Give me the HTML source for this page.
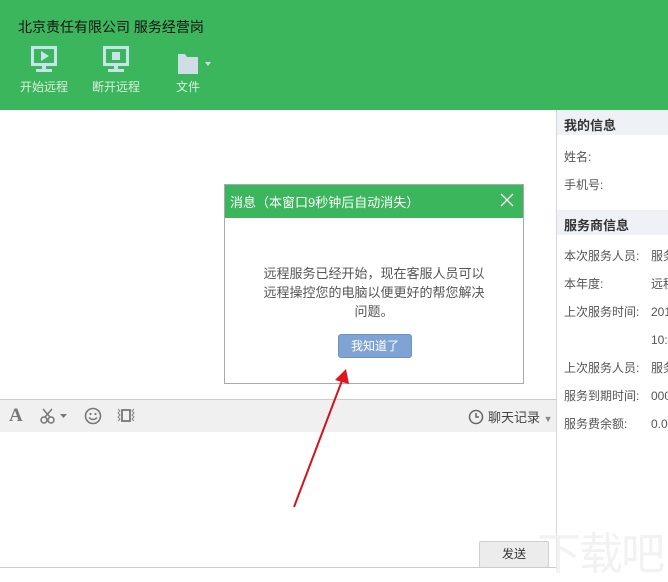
<!DOCTYPE html>
<html><head><meta charset="utf-8"><style>
*{margin:0;padding:0;box-sizing:border-box}
body{width:668px;height:570px;overflow:hidden;background:#fff;font-family:"Liberation Sans","Noto Sans CJK SC",sans-serif;position:relative;font-size:12px}
.top{position:absolute;left:0;top:0;width:668px;height:110px;background:#3cb65d}
.title{position:absolute;left:18px;top:17px;font-size:14px;color:#111}
.tb{position:absolute;top:78px;font-size:12px;color:#d8eedd}
.side{position:absolute;left:556px;top:110px;width:112px;height:460px;border-left:1px solid #d6d6d6;background:#fff}
.sh{position:absolute;left:0;width:112px;height:25px;background:#eef2f7;font-size:13px;font-weight:bold;color:#333;padding:5px 0 0 7px}
.sl{position:absolute;left:7px;color:#555;font-size:12px;white-space:nowrap;line-height:16px;height:16px}
.v{position:absolute;left:87px;top:0;line-height:16px}
.bar{position:absolute;left:0;top:399px;width:556px;height:33px;background:#f0f0f0;border-top:1px solid #ccc}
.dlg{position:absolute;left:224px;top:184px;width:300px;height:200px;border:1px solid #aaa;background:#fff}
.dh{height:33px;background:#3cb65d;color:#fff;font-size:13px;padding:7px 0 0 5px}
.msg{position:absolute;left:0;top:79px;width:298px;text-align:center;font-size:13px;color:#555;line-height:19px}
.btn{position:absolute;left:113px;top:149px;width:74px;height:24px;background:#7fa4d4;border:1px solid #6b93c8;border-radius:3px;color:#fff;text-align:center;font-size:12px;line-height:22px}
.send{position:absolute;left:479px;top:541px;width:70px;height:27px;background:#ececec;border:1px solid #d0d0d0;border-radius:2px;text-align:center;line-height:25px;color:#333}
</style></head><body>
<div class="top">
<div class="title">北京责任有限公司 服务经营岗</div>
<svg style="position:absolute;left:30px;top:46px" width="28" height="28"><rect x="2.5" y="1.5" width="23" height="17" fill="none" stroke="#c6e4ea" stroke-width="3"/><polygon points="11,5 11,15 19,10" fill="#c6e4ea"/><rect x="12" y="20" width="4" height="4" fill="#c6e4ea"/><rect x="6" y="23" width="16" height="3" fill="#c6e4ea"/></svg>
<svg style="position:absolute;left:102px;top:46px" width="28" height="28"><rect x="2.5" y="1.5" width="23" height="17" fill="none" stroke="#c6e4ea" stroke-width="3"/><rect x="10" y="6" width="8" height="8" fill="#c6e4ea"/><rect x="12" y="20" width="4" height="4" fill="#c6e4ea"/><rect x="6" y="23" width="16" height="3" fill="#c6e4ea"/></svg>
<svg style="position:absolute;left:176px;top:52px" width="40" height="22"><path d="M2 2h7l2 3h11v17H2z" fill="#cfdde6"/><polygon points="29,10 35,10 32,14" fill="#cfdde6"/></svg>
<div class="tb" style="left:20px">开始远程</div>
<div class="tb" style="left:92px">断开远程</div>
<div class="tb" style="left:176px">文件</div>
</div>
<div class="side">
<div class="sh" style="top:0">我的信息</div>
<div class="sl" style="top:39px">姓名:</div>
<div class="sl" style="top:67px">手机号:</div>
<div class="sh" style="top:100px">服务商信息</div>
<div class="sl" style="top:138px">本次服务人员:<span class="v">服务</span></div>
<div class="sl" style="top:166px">本年度:<span class="v">远程</span></div>
<div class="sl" style="top:194px">上次服务时间:<span class="v">2019</span></div>
<div class="sl" style="top:222px"><span class="v">10:4</span></div>
<div class="sl" style="top:250px">上次服务人员:<span class="v">服务</span></div>
<div class="sl" style="top:278px">服务到期时间:<span class="v">0000</span></div>
<div class="sl" style="top:306px">服务费余额:<span class="v">0.00</span></div>
</div>
<div class="bar">
<span style="position:absolute;left:9px;top:5px;font-size:19px;font-family:'Liberation Serif',serif;font-weight:bold;color:#777">A</span>
<svg style="position:absolute;left:40px;top:8px" width="30" height="16"><circle cx="4" cy="12" r="3" fill="none" stroke="#777" stroke-width="1.5"/><circle cx="11" cy="12" r="3" fill="none" stroke="#777" stroke-width="1.5"/><line x1="5" y1="9" x2="12" y2="1" stroke="#777" stroke-width="1.5"/><line x1="10" y1="9" x2="3" y2="1" stroke="#777" stroke-width="1.5"/><polygon points="20,6 27,6 23.5,10" fill="#777"/></svg>
<svg style="position:absolute;left:84px;top:7px" width="18" height="18"><circle cx="9" cy="9" r="7.5" fill="none" stroke="#777" stroke-width="1.6"/><circle cx="6.5" cy="7" r="1.1" fill="#777"/><circle cx="11.5" cy="7" r="1.1" fill="#777"/><path d="M5 10.5q4 4 8 0" fill="none" stroke="#777" stroke-width="1.5"/></svg>
<svg style="position:absolute;left:116px;top:7px" width="20" height="18"><path d="M2 2l2 2-2 2 2 2-2 2 2 2-2 2M18 2l-2 2 2 2-2 2 2 2-2 2 2 2" fill="none" stroke="#888" stroke-width="1"/><rect x="6" y="3" width="8" height="11" fill="none" stroke="#777" stroke-width="1.8"/></svg>
<svg style="position:absolute;left:468px;top:9px" width="16" height="16"><circle cx="8" cy="8" r="6.5" fill="none" stroke="#666" stroke-width="1.5"/><path d="M8 4v4h3" fill="none" stroke="#666" stroke-width="1.5"/></svg>
<span style="position:absolute;left:488px;top:7px;font-size:13px;color:#444">聊天记录 <span style="font-size:9px;color:#888">▼</span></span>
</div>
<div class="dlg">
<div class="dh">消息（本窗口9秒钟后自动消失）</div>
<svg style="position:absolute;right:8px;top:7px" width="16" height="16"><path d="M2 2L14 14M14 2L2 14" stroke="#fff" stroke-width="1.3"/></svg>
<div class="msg">远程服务已经开始，现在客服人员可以<br>远程操控您的电脑以便更好的帮您解决<br>问题。</div>
<div class="btn">我知道了</div>
</div>
<svg style="position:absolute;left:0;top:0" width="668" height="570"><line x1="294" y1="507" x2="343" y2="378" stroke="#d0141c" stroke-width="2"/><polygon points="346,369 335,380 349,384" fill="#e0141c"/></svg>
<div class="send">发送</div>
<div style="position:absolute;left:0;top:567px;width:556px;height:1px;background:#ccc"></div>
<div style="position:absolute;left:537px;top:518px;font-size:44px;color:#f2f2f2;letter-spacing:-2px">下载吧</div>
</body></html>
